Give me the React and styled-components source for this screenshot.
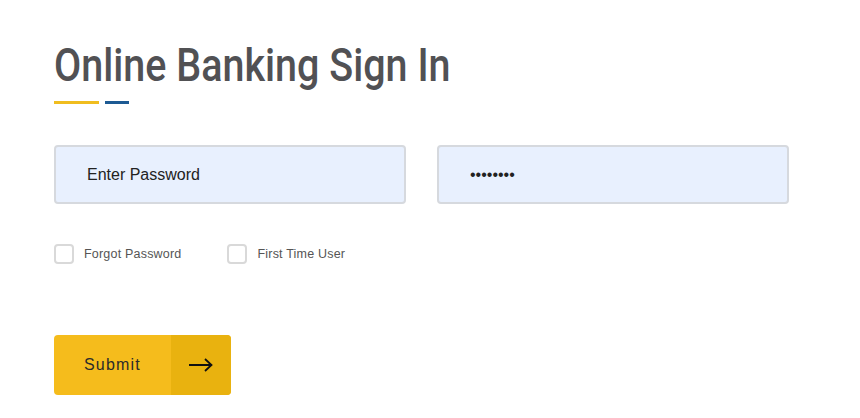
import React from 'react';
import styled, { createGlobalStyle } from 'styled-components';

const GlobalStyle = createGlobalStyle`
    body {
        margin: 0;
        background: #fff;
        font-family: "Liberation Sans", Arial, sans-serif;
    }
`;

const Page = styled.div`
    padding: 38px 54px 0 54px;
    width: 735px;
`;

const Title = styled.h1`
    display: inline-block;
    margin: 0;
    font-family: Roboto, "Liberation Sans", sans-serif;
    font-weight: 500;
    font-size: 47px;
    line-height: 54px;
    color: #515154;
    transform: scaleX(0.84);
    transform-origin: left center;
    white-space: nowrap;
`;

const Bars = styled.div`
    display: flex;
    gap: 6px;
    margin-top: 9px;
`;

const Bar = styled.span`
    height: 3px;
    width: ${p => p.w}px;
    background: ${p => p.color};
`;

const Fields = styled.div`
    display: grid;
    grid-template-columns: 1fr 1fr;
    gap: 31px;
    margin-top: 41px;
`;

const Input = styled.input`
    box-sizing: border-box;
    height: 59px;
    width: 100%;
    padding: 0 0 0 31px;
    border: 2px solid #d6d9de;
    border-radius: 4px;
    background: #e8f0fe;
    font-family: "Liberation Sans", Arial, sans-serif;
    font-size: 16px;
    color: #222;
    outline: none;
    &::placeholder {
        color: #222;
    }
`;

const Options = styled.div`
    display: flex;
    gap: 46px;
    margin-top: 40px;
`;

const Option = styled.label`
    display: flex;
    align-items: center;
    gap: 10px;
    font-family: "Liberation Sans", sans-serif;
    font-size: 12.5px;
    color: #555;
    letter-spacing: 0.2px;
`;

const Box = styled.span`
    box-sizing: border-box;
    width: 20px;
    height: 20px;
    border: 2px solid #d9d9d9;
    border-radius: 4px;
    background: #fff;
`;

const Submit = styled.button`
    display: flex;
    align-items: stretch;
    margin-top: 71px;
    padding: 0;
    height: 60px;
    border: none;
    border-radius: 4px;
    overflow: hidden;
    cursor: pointer;
    background: #f5bc1c;
`;

const SubmitText = styled.span`
    display: flex;
    align-items: center;
    width: 117px;
    padding-left: 30px;
    box-sizing: border-box;
    font-family: "Liberation Sans", Arial, sans-serif;
    font-size: 16px;
    letter-spacing: 1.2px;
    color: #2b2b2b;
`;

const ArrowCell = styled.span`
    display: flex;
    align-items: center;
    justify-content: center;
    width: 60px;
    background: #e9b20f;
`;

function Arrow() {
    return (
        <svg width="24" height="14" viewBox="0 0 24 14" fill="none" stroke="#111" strokeWidth="1.8">
            <path d="M0 7h22" />
            <path d="M16 1l6.5 6-6.5 6" />
        </svg>
    );
}

export default function App() {
    return (
        <Page>
            <GlobalStyle />
            <Title>Online Banking Sign In</Title>
            <Bars>
                <Bar w={45} color="#f0bd1f" />
                <Bar w={24} color="#1d5a93" />
            </Bars>
            <Fields>
                <Input type="text" placeholder="Enter Password" />
                <Input type="password" defaultValue="password" />
            </Fields>
            <Options>
                <Option>
                    <Box />
                    Forgot Password
                </Option>
                <Option>
                    <Box />
                    First Time User
                </Option>
            </Options>
            <Submit>
                <SubmitText>Submit</SubmitText>
                <ArrowCell>
                    <Arrow />
                </ArrowCell>
            </Submit>
        </Page>
    );
}
